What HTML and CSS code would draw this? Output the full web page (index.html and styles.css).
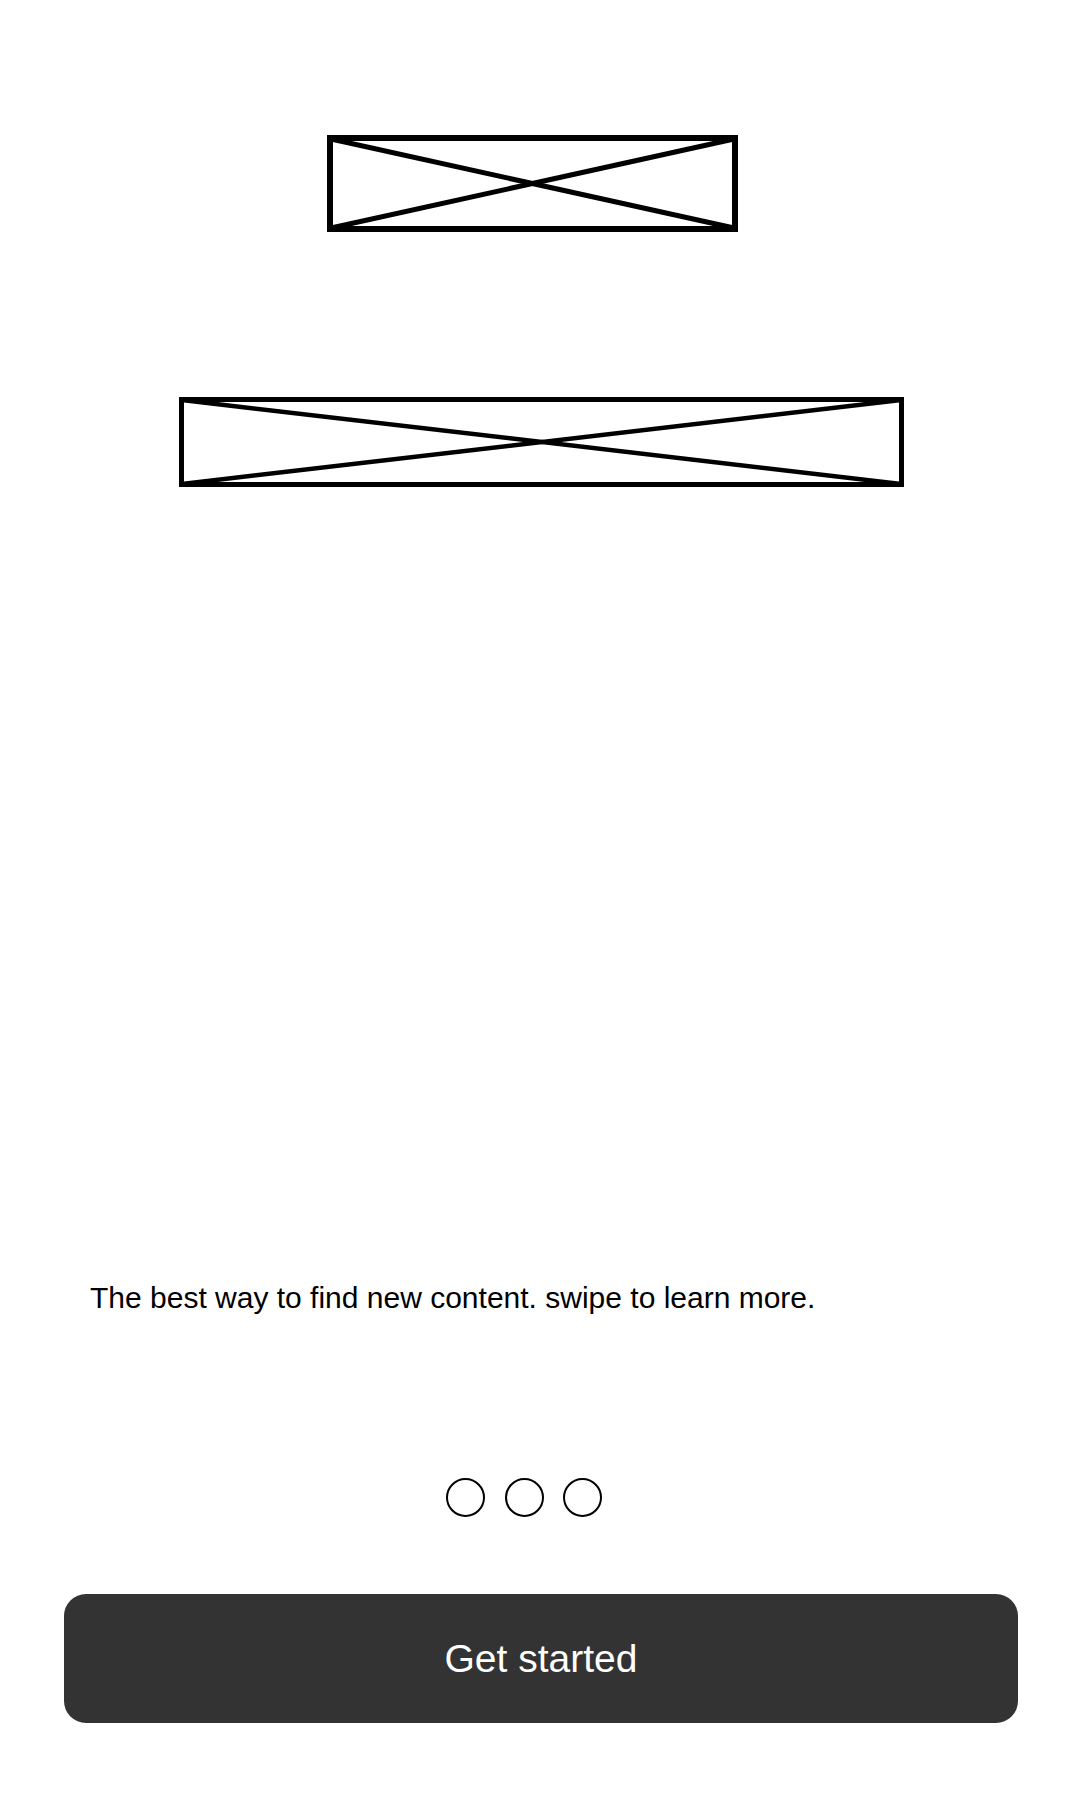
FILE: index.html
```html
<!DOCTYPE html>
<html lang="en">
<head>
<meta charset="utf-8">
<title>Welcome</title>
<link rel="stylesheet" href="styles.css">
</head>
<body>
<main class="screen">
  <div class="placeholder placeholder-top">
    <svg width="411" height="97" viewBox="0 0 411 97">
      <rect x="3" y="3" width="405" height="91" fill="none" stroke="#000" stroke-width="6"/>
      <line x1="4" y1="4" x2="407" y2="93" stroke="#000" stroke-width="5"/>
      <line x1="4" y1="93" x2="407" y2="4" stroke="#000" stroke-width="5"/>
    </svg>
  </div>
  <div class="placeholder placeholder-logo">
    <svg width="725" height="90" viewBox="0 0 725 90">
      <rect x="2.5" y="2.5" width="720" height="85" fill="none" stroke="#000" stroke-width="5"/>
      <line x1="3" y1="3" x2="722" y2="87" stroke="#000" stroke-width="4.5"/>
      <line x1="3" y1="87" x2="722" y2="3" stroke="#000" stroke-width="4.5"/>
    </svg>
  </div>
  <p class="tagline">The best way to find new content. swipe to learn more.</p>
  <div class="dots">
    <span class="dot"></span>
    <span class="dot"></span>
    <span class="dot"></span>
  </div>
  <button class="cta" type="button">Get started</button>
</main>
</body>
</html>
```

FILE: styles.css
```css
html, body {
  margin: 0;
  padding: 0;
  background: #ffffff;
}

body {
  font-family: "Liberation Sans", Arial, sans-serif;
  color: #000000;
}

.screen {
  width: 1080px;
  height: 1800px;
  display: flex;
  flex-direction: column;
  align-items: flex-start;
  padding-top: 135px;
  box-sizing: border-box;
}

.placeholder svg {
  display: block;
}

.placeholder-top {
  margin-left: 327px;
}

.placeholder-logo {
  margin-top: 165px;
  margin-left: 179px;
}

.tagline {
  margin: 793px 0 0 90px;
  font-size: 30px;
  line-height: 36px;
}

.dots {
  margin: 162px 0 0 446px;
  display: flex;
  gap: 19.5px;
}

.dot {
  width: 39px;
  height: 39px;
  box-sizing: border-box;
  border: 2.5px solid #000000;
  border-radius: 50%;
}

.cta {
  margin: 77px 0 0 64px;
  width: 954px;
  height: 129px;
  border: none;
  border-radius: 22px;
  background: #333333;
  color: #ffffff;
  font-family: "Liberation Sans", Arial, sans-serif;
  font-size: 39px;
  padding: 0;
  display: flex;
  align-items: center;
  justify-content: center;
}
```
